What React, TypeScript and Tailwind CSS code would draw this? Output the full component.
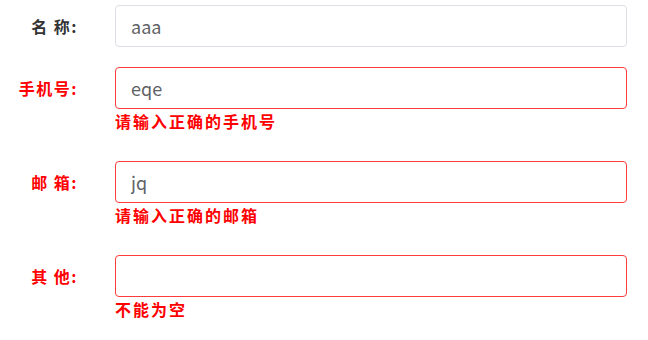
import React from 'react'

interface Field {
  label: string
  value: string
  error?: string
}

const fields: Field[] = [
  { label: '名 称:', value: 'aaa' },
  { label: '手机号:', value: 'eqe', error: '请输入正确的手机号' },
  { label: '邮 箱:', value: 'jq', error: '请输入正确的邮箱' },
  { label: '其 他:', value: '', error: '不能为空' },
]

export default function App() {
  return (
    <div className="w-[648px] h-[340px] bg-white pt-[5px] font-['Microsoft_YaHei','Noto_Sans_CJK_SC',sans-serif]">
      {fields.map(field => (
        <div key={field.label} className="flex items-start">
          <div
            className={
              field.error
                ? 'w-[80px] h-[42px] flex items-center justify-end pr-[2px] text-[16px] tracking-[1.5px] font-bold text-[#ff0000]'
                : 'w-[80px] h-[42px] flex items-center justify-end pr-[2px] text-[16px] tracking-[1.5px] font-bold text-[#333333]'
            }
          >
            {field.label}
          </div>
          <div className="ml-[35px] w-[512px]">
            <input
              readOnly
              value={field.value}
              className={
                field.error
                  ? 'w-full h-[42px] rounded-[4px] border border-[#ff3b3b] px-[15px] text-[18px] text-[#606266] outline-none'
                  : 'w-full h-[42px] rounded-[4px] border border-[#dcdfe6] px-[15px] text-[18px] text-[#606266] outline-none'
              }
            />
            {field.error ? (
              <div className="h-[52px] pt-[2px] text-[16px] leading-[20px] tracking-[2px] font-bold text-[#ff0000]">
                {field.error}
              </div>
            ) : (
              <div className="h-[20px]" />
            )}
          </div>
        </div>
      ))}
    </div>
  )
}
